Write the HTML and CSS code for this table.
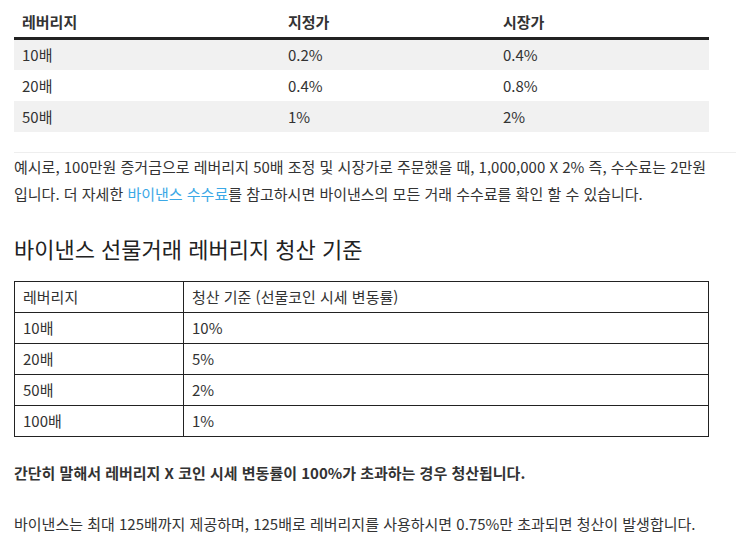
FILE: index.html
```html
<!DOCTYPE html>
<html lang="ko">
<head>
<meta charset="utf-8">
<link rel="stylesheet" href="styles.css">
</head>
<body>
<div class="content">
  <table class="fee">
    <thead>
      <tr><th>레버리지</th><th>지정가</th><th>시장가</th></tr>
    </thead>
    <tbody>
      <tr><td>10배</td><td>0.2%</td><td>0.4%</td></tr>
      <tr><td>20배</td><td>0.4%</td><td>0.8%</td></tr>
      <tr><td>50배</td><td>1%</td><td>2%</td></tr>
    </tbody>
  </table>
  <hr class="sep">
  <p class="text">예시로, 100만원 증거금으로 레버리지 50배 조정 및 시장가로 주문했을 때, 1,000,000 X 2% 즉, 수수료는 2만원입니다. 더 자세한 <a class="link" href="#">바이낸스 수수료</a>를 참고하시면 바이낸스의 모든 거래 수수료를 확인 할 수 있습니다.</p>
  <h2 class="title">바이낸스 선물거래 레버리지 청산 기준</h2>
  <table class="liq">
    <tr><td class="c1">레버리지</td><td>청산 기준 (선물코인 시세 변동률)</td></tr>
    <tr><td class="c1">10배</td><td>10%</td></tr>
    <tr><td class="c1">20배</td><td>5%</td></tr>
    <tr><td class="c1">50배</td><td>2%</td></tr>
    <tr><td class="c1">100배</td><td>1%</td></tr>
  </table>
  <p class="text bold">간단히 말해서 레버리지 X 코인 시세 변동률이 100%가 초과하는 경우 청산됩니다.</p>
  <p class="text last">바이낸스는 최대 125배까지 제공하며, 125배로 레버리지를 사용하시면 0.75%만 초과되면 청산이 발생합니다.</p>
</div>
</body>
</html>
```

FILE: styles.css
```css
html, body {
  margin: 0;
  padding: 0;
  background: #fff;
}
body {
  font-family: "Noto Sans CJK KR", "Noto Sans", sans-serif;
  color: #333;
  font-size: 15px;
}
.content {
  padding: 7px 0 0 14px;
}
table {
  border-collapse: collapse;
  width: 695px;
  font-size: 15px;
}
th, td {
  box-sizing: border-box;
}
.fee th {
  text-align: left;
  font-weight: bold;
  padding: 4px 8px 5px;
  height: 31px;
  border-bottom: 3px solid #222;
  color: #333;
}
.fee td {
  padding: 0 8px;
  height: 31px;
}
.fee th:nth-child(1), .fee td:nth-child(1) { width: 266px; }
.fee th:nth-child(2), .fee td:nth-child(2) { width: 215px; }
.fee tbody tr:nth-child(odd) td { background: #f1f1f1; }
.sep {
  border: 0;
  border-top: 1px solid #eee;
  margin: 20px 0 0 0;
}
.text {
  margin: 0;
  line-height: 27px;
  width: 695px;
}
.link {
  color: #3ba8e6;
  text-decoration: none;
}
.title {
  font-size: 22px;
  font-weight: normal;
  margin: 25px 0 0;
  line-height: 32px;
  color: #222;
}
.liq {
  margin-top: 17px;
}
.liq td {
  border: 1px solid #222;
  padding: 0 9px 0 8px;
  height: 31px;
}
.liq .c1 { width: 169px; }
.bold {
  font-weight: bold;
  margin-top: 22px;
}
.last {
  margin-top: 24px;
}
```
